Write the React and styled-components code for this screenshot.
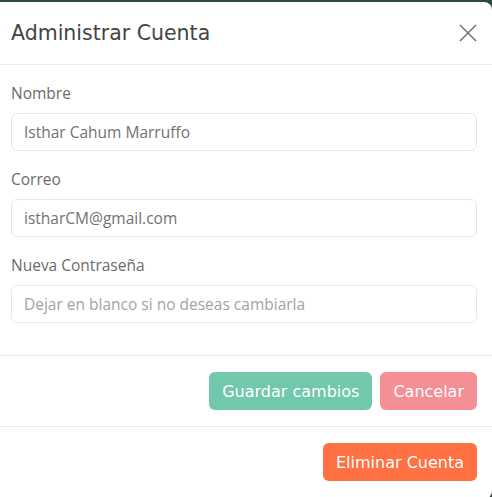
import React from "react";
import styled, { createGlobalStyle } from "styled-components";

const GlobalStyle = createGlobalStyle`
  html, body {
    margin: 0;
    padding: 0;
    background: #284c43;
    overflow: hidden;
  }
`;

const Modal = styled.div`
  margin: 2px 0 0 -8px;
  width: 500px;
  height: 497px;
  background: #fff;
  border-radius: 8px;
  display: flex;
  flex-direction: column;
  box-sizing: border-box;
  padding-left: 8px;
`;

const Header = styled.div`
  height: 63px;
  flex-shrink: 0;
  display: flex;
  align-items: center;
  justify-content: space-between;
  padding: 0 14px 0 11px;
  border-bottom: 1px solid #e9ecef;
  box-sizing: border-box;
`;

const Title = styled.h1`
  margin: 0;
  font-family: "DejaVu Sans", sans-serif;
  font-weight: 400;
  font-size: 20.5px;
  color: #444;
`;

const CloseBtn = styled.button`
  border: none;
  background: none;
  padding: 0;
  width: 20px;
  height: 20px;
  cursor: pointer;
  display: flex;
  align-items: center;
  justify-content: center;
`;

const Body = styled.div`
  padding: 17px 15px 0 11px;
  display: flex;
  flex-direction: column;
  height: 291px;
  flex-shrink: 0;
  box-sizing: border-box;
  border-bottom: 1px solid #e9ecef;
`;

const Field = styled.div`
  display: flex;
  flex-direction: column;
  margin-bottom: 17px;
`;

const Label = styled.label`
  font-family: "Open Sans", sans-serif;
  font-size: 15.5px;
  color: #6c6c6c;
  line-height: 22px;
  margin-bottom: 9px;
`;

const Input = styled.input`
  height: 38px;
  box-sizing: border-box;
  border: 1px solid #e6e6e6;
  border-radius: 6px;
  padding: 0 12px;
  font-family: "Open Sans", sans-serif;
  font-size: 15.5px;
  color: #727272;
  outline: none;
  &::placeholder {
    color: #a3a3a3;
  }
`;

const Footer = styled.div`
  display: flex;
  justify-content: flex-end;
  gap: 8px;
  padding: 16px 15px 16px 0;
  border-bottom: ${(p) => (p.$line ? "1px solid #e9ecef" : "none")};
`;

const Button = styled.button`
  height: 38px;
  border: none;
  border-radius: 6px;
  padding: 0 13px;
  background: ${(p) => p.$color};
  color: #fff;
  font-family: "DejaVu Sans", sans-serif;
  font-size: 16px;
  cursor: pointer;
`;

export default function App() {
  return (
    <>
      <GlobalStyle />
      <Modal>
        <Header>
          <Title>Administrar Cuenta</Title>
          <CloseBtn aria-label="Cerrar">
            <svg width="18" height="18" viewBox="0 0 18 18">
              <path d="M1 1L17 17M17 1L1 17" stroke="#777" strokeWidth="1.6" />
            </svg>
          </CloseBtn>
        </Header>
        <Body>
          <Field>
            <Label>Nombre</Label>
            <Input defaultValue="Isthar Cahum Marruffo" />
          </Field>
          <Field>
            <Label>Correo</Label>
            <Input defaultValue="istharCM@gmail.com" />
          </Field>
          <Field>
            <Label>Nueva Contraseña</Label>
            <Input type="password" placeholder="Dejar en blanco si no deseas cambiarla" />
          </Field>
        </Body>
        <Footer $line>
          <Button $color="#71c8ad">Guardar cambios</Button>
          <Button $color="#f58f96">Cancelar</Button>
        </Footer>
        <Footer>
          <Button $color="#ff7043">Eliminar Cuenta</Button>
        </Footer>
      </Modal>
    </>
  );
}
